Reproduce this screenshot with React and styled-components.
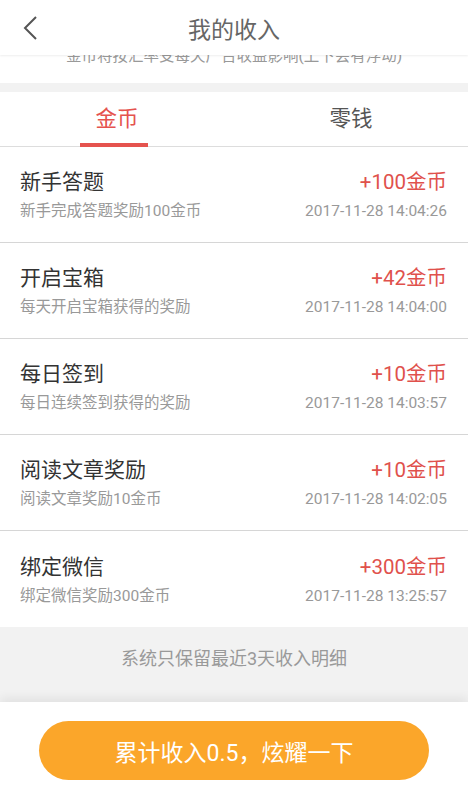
import React from 'react';
import styled, { createGlobalStyle } from 'styled-components';

const GlobalStyle = createGlobalStyle`
  html, body {
    margin: 0;
    padding: 0;
    background: #fff;
  }
  body {
    font-family: Roboto, "Noto Sans CJK SC", sans-serif;
  }
  * {
    box-sizing: border-box;
  }
`;

const Page = styled.div`
  width: 468px;
  height: 800px;
  display: flex;
  flex-direction: column;
  overflow: hidden;
  background: #fff;
`;

const Header = styled.div`
  position: relative;
  z-index: 2;
  height: 55px;
  flex-shrink: 0;
  display: flex;
  align-items: center;
  justify-content: center;
  background: #fff;
  box-shadow: 0 1px 2px rgba(0, 0, 0, 0.07);
`;

const BackButton = styled.div`
  position: absolute;
  left: 22px;
  top: 15px;
  width: 18px;
  height: 26px;
  display: flex;
`;

const Title = styled.h1`
  margin: 0;
  font-size: 23px;
  font-weight: 400;
  color: #666;
`;

const Notice = styled.div`
  height: 28px;
  flex-shrink: 0;
  overflow: hidden;
  border-bottom: 9px solid #f2f2f2;
  box-sizing: content-box;
`;

const NoticeText = styled.p`
  margin: -9px 0 0;
  line-height: 20px;
  font-size: 15.5px;
  color: #999;
  text-align: center;
`;

const Tabs = styled.div`
  height: 55px;
  flex-shrink: 0;
  display: flex;
  border-bottom: 1px solid #ddd;
`;

const Tab = styled.div`
  position: relative;
  flex: 1;
  display: flex;
  align-items: center;
  justify-content: center;
  padding-bottom: 5px;
  font-size: 21.5px;
  color: ${(p) => (p.$active ? '#e5534e' : '#555')};

  &::after {
    content: '';
    display: ${(p) => (p.$active ? 'block' : 'none')};
    position: absolute;
    bottom: -1px;
    left: 50%;
    margin-left: -37px;
    width: 68px;
    height: 4px;
    background: #e5534e;
  }
`;

const List = styled.div`
  display: flex;
  flex-direction: column;
`;

const Row = styled.div`
  height: 96px;
  flex-shrink: 0;
  display: flex;
  align-items: center;
  justify-content: space-between;
  padding: 0 21px 0 20px;
  border-bottom: ${(p) => (p.$last ? 'none' : '1px solid #d6d6d6')};
`;

const Col = styled.div`
  display: flex;
  flex-direction: column;
  align-items: ${(p) => (p.$right ? 'flex-end' : 'flex-start')};
`;

const ItemTitle = styled.div`
  font-size: ${(p) => (p.$red ? '20.5px' : '21px')};
  line-height: 30px;
  color: ${(p) => (p.$red ? '#e0514c' : '#333')};
`;

const ItemSub = styled.div`
  margin-top: 3px;
  font-size: 15.5px;
  line-height: 22px;
  color: #999;
`;

const Footer = styled.div`
  height: 75px;
  flex-shrink: 0;
  display: flex;
  justify-content: center;
  padding-top: 19px;
  background: #f2f2f2;
  font-size: 18px;
  line-height: 26px;
  color: #999;
`;

const BottomBar = styled.div`
  position: relative;
  flex: 1;
  display: flex;
  justify-content: center;
  padding-top: 19px;
  background: #fff;
  box-shadow: 0 -4px 10px rgba(0, 0, 0, 0.07);
`;

const ShareButton = styled.button`
  width: 390px;
  height: 59px;
  border: none;
  border-radius: 30px;
  background: #fba62a;
  color: #fff;
  font-family: Roboto, "Noto Sans CJK SC", sans-serif;
  font-size: 23px;
  cursor: pointer;
`;

const items = [
  { title: '新手答题', sub: '新手完成答题奖励100金币', amount: '+100金币', time: '2017-11-28 14:04:26' },
  { title: '开启宝箱', sub: '每天开启宝箱获得的奖励', amount: '+42金币', time: '2017-11-28 14:04:00' },
  { title: '每日签到', sub: '每日连续签到获得的奖励', amount: '+10金币', time: '2017-11-28 14:03:57' },
  { title: '阅读文章奖励', sub: '阅读文章奖励10金币', amount: '+10金币', time: '2017-11-28 14:02:05' },
  { title: '绑定微信', sub: '绑定微信奖励300金币', amount: '+300金币', time: '2017-11-28 13:25:57' },
];

const App = () => {
  return (
    <Page>
      <GlobalStyle />
      <Header>
        <BackButton>
          <svg width="18" height="26" viewBox="0 0 18 26">
            <polyline points="14,2 3,13 14,24" fill="none" stroke="#555" strokeWidth="2" />
          </svg>
        </BackButton>
        <Title>我的收入</Title>
      </Header>
      <Notice>
        <NoticeText>金币将按汇率受每天广告收益影响(上下会有浮动)</NoticeText>
      </Notice>
      <Tabs>
        <Tab $active>金币</Tab>
        <Tab>零钱</Tab>
      </Tabs>
      <List>
        {items.map((item, i) => (
          <Row key={i} $last={i === items.length - 1}>
            <Col>
              <ItemTitle>{item.title}</ItemTitle>
              <ItemSub>{item.sub}</ItemSub>
            </Col>
            <Col $right>
              <ItemTitle $red>{item.amount}</ItemTitle>
              <ItemSub>{item.time}</ItemSub>
            </Col>
          </Row>
        ))}
      </List>
      <Footer>系统只保留最近3天收入明细</Footer>
      <BottomBar>
        <ShareButton>累计收入0.5，炫耀一下</ShareButton>
      </BottomBar>
    </Page>
  );
};

export default App;
